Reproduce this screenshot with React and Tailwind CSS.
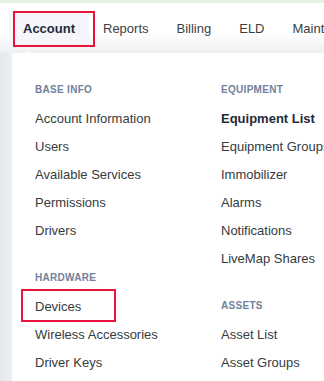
import React from "react";

const font = { fontFamily: '"Liberation Sans", Arial, sans-serif' };

function Header({ children }) {
  return (
    <div className="h-[20px] flex items-center text-[10px] font-bold tracking-[0.3px] text-[#6f829c] whitespace-nowrap">
      {children}
    </div>
  );
}

function Item({ children, bold, boxed }) {
  return (
    <div
      className={`relative h-[28px] flex items-center text-[13px] whitespace-nowrap ${
        bold ? "font-bold text-[#1f2b3a]" : "text-[#363b40]"
      }`}
    >
      {boxed && (
        <div className="absolute left-[-14px] top-[-4px] w-[95px] h-[33px] border-2 border-[#e8143c]" />
      )}
      <span className="relative">{children}</span>
    </div>
  );
}

export default function App() {
  return (
    <div
      className="w-[324px] h-[381px] overflow-hidden bg-white flex flex-col relative"
      style={font}
    >
      <div className="h-[3px] bg-[#e2f4df] shrink-0" />
      <div className="h-[50px] shrink-0 bg-gradient-to-b from-white from-60% to-[#eef0f2] relative">
        <div className="flex pl-[9px] pt-[8px] whitespace-nowrap text-[13px] text-[#3b3f44]">
          <div className="relative h-[36px] px-[14px] flex items-center bg-[#f4f6f9] font-bold text-[#1c2a3a]">
            <div className="absolute left-[4px] top-0 w-[82px] h-[36px] border-2 border-[#e8143c]" />
            <span className="relative">Account</span>
          </div>
          <div className="h-[36px] px-[14px] flex items-center">Reports</div>
          <div className="h-[36px] px-[14px] flex items-center">Billing</div>
          <div className="h-[36px] px-[14px] flex items-center">ELD</div>
          <div className="h-[36px] px-[14px] flex items-center">Maintenance</div>
        </div>
        <div className="absolute left-[24px] top-[48px] w-0 h-0 border-l-[5px] border-r-[5px] border-b-[5px] border-l-transparent border-r-transparent border-b-white" />
      </div>
      <div className="flex flex-1">
        <div className="w-[12px] bg-gradient-to-r from-[#e4e7eb] to-[#eceef1] shrink-0" />
        <div className="flex-1 bg-white pt-[26px] pl-[23px] grid grid-cols-[186px_1fr]">
          <div className="flex flex-col">
            <Header>BASE INFO</Header>
            <div className="h-[6px]" />
            <Item>Account Information</Item>
            <Item>Users</Item>
            <Item>Available Services</Item>
            <Item>Permissions</Item>
            <Item>Drivers</Item>
            <div className="h-[22px]" />
            <Header>HARDWARE</Header>
            <div className="h-[6px]" />
            <Item boxed>Devices</Item>
            <Item>Wireless Accessories</Item>
            <Item>Driver Keys</Item>
          </div>
          <div className="flex flex-col">
            <Header>EQUIPMENT</Header>
            <div className="h-[6px]" />
            <Item bold>Equipment List</Item>
            <Item>Equipment Groups</Item>
            <Item>Immobilizer</Item>
            <Item>Alarms</Item>
            <Item>Notifications</Item>
            <Item>LiveMap Shares</Item>
            <div className="h-[22px]" />
            <Header>ASSETS</Header>
            <div className="h-[6px]" />
            <Item>Asset List</Item>
            <Item>Asset Groups</Item>
          </div>
        </div>
      </div>
    </div>
  );
}
